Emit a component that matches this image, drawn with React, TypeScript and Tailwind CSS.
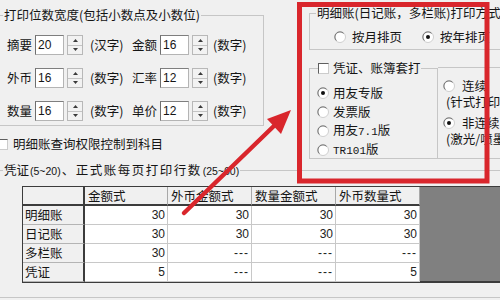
import React from "react";

function Radio({ checked = false }: { checked?: boolean }) {
  return (
    <svg width="12" height="12" viewBox="0 0 12 12" className="shrink-0">
      <circle cx="6" cy="6" r="5.5" fill="#ffffff" stroke="#cfcfcf" />
      <path d="M9.6 2.4 A5 5 0 0 0 2.4 9.6" stroke="#6e6e6e" fill="none" strokeWidth="1" />
      {checked && <circle cx="6" cy="6" r="2" fill="#111111" />}
    </svg>
  );
}

function CheckBox() {
  return (
    <span className="block w-[11px] h-[11px] shrink-0 bg-white border border-[#cccccc] border-l-[#5e5e5e] border-t-[#5e5e5e]" />
  );
}

function Spinner() {
  return (
    <div className="w-[16px] h-[20px] shrink-0 flex flex-col border border-[#b8b8b8] bg-[#f2f2f2]">
      <div className="flex-1 flex items-center justify-center border-b border-[#c4c4c4]">
        <svg width="5" height="3" viewBox="0 0 5 3">
          <path d="M0 3 L2.5 0 L5 3 Z" fill="#3a3a3a" />
        </svg>
      </div>
      <div className="flex-1 flex items-center justify-center">
        <svg width="5" height="3" viewBox="0 0 5 3">
          <path d="M0 0 L5 0 L2.5 3 Z" fill="#3a3a3a" />
        </svg>
      </div>
    </div>
  );
}

function NumInput({ v }: { v: string }) {
  return (
    <div className="w-[29px] h-[20px] shrink-0 bg-white border border-[#b4b4b4] border-l-[#6e6e6e] border-t-[#7e7e7e] flex items-center pl-[2px] font-['Liberation_Sans',sans-serif] text-[12px]">
      {v}
    </div>
  );
}

function FieldRow({
  a,
  av,
  at,
  b,
  bv,
}: {
  a: string;
  av: string;
  at: string;
  b: string;
  bv: string;
}) {
  return (
    <div className="flex items-center h-[20px]">
      <span className="w-[25px] shrink-0">{a}</span>
      <div className="ml-[3px]">
        <NumInput v={av} />
      </div>
      <div className="ml-[3px]">
        <Spinner />
      </div>
      <span className="ml-[7px] w-[38px] shrink-0">{at}</span>
      <span className="ml-[4px] w-[25px] shrink-0">{b}</span>
      <div className="ml-[3px]">
        <NumInput v={bv} />
      </div>
      <div className="ml-[3px]">
        <Spinner />
      </div>
      <span className="ml-[5px] shrink-0">(数字)</span>
    </div>
  );
}

const rows = [
  ["明细账", "30", "30", "30", "30"],
  ["日记账", "30", "30", "30", "30"],
  ["多栏账", "30", "---", "---", "---"],
  ["凭证", "5", "---", "---", "5"],
];
const heads = ["", "金额式", "外币金额式", "数量金额式", "外币数量式"];

export default function App() {
  return (
    <div className="relative w-[500px] h-[300px] overflow-hidden bg-[#f0f0f0] text-[#151515] text-[12.5px] leading-[16px] font-['Noto_Sans_CJK_SC',sans-serif]">
      {/* top section */}
      <div className="flex items-start h-[162px]">
        {/* left column */}
        <div className="ml-[-3px] w-[267px] shrink-0 flex flex-col">
          <fieldset className="mt-[7px] h-[119px] min-w-0 border border-[#c6c6c6]">
            <legend className="ml-[5px] px-[1px] leading-[16px]">打印位数宽度(包括小数点及小数位)</legend>
            <div className="mt-[12px] pl-[9px] flex flex-col gap-[13px]">
              <FieldRow a="摘要" av="20" at="(汉字)" b="金额" bv="16" />
              <FieldRow a="外币" av="16" at="(数字)" b="汇率" bv="12" />
              <FieldRow a="数量" av="16" at="(数字)" b="单价" bv="12" />
            </div>
          </fieldset>
          <div className="mt-[10px] h-[16px] flex items-center">
            <CheckBox />
            <span className="ml-[5px]">明细账查询权限控制到科目</span>
          </div>
        </div>

        {/* right column */}
        <div className="ml-[45px] w-[240px] shrink-0 flex flex-col">
          <fieldset className="mt-[5px] h-[45px] min-w-0 border border-[#c6c6c6]">
            <legend className="ml-[6px] px-[1px] leading-[16px] whitespace-nowrap">明细账(日记账，多栏账)打印方式</legend>
            <div className="mt-[8px] h-[16px] pl-[24px] flex items-center whitespace-nowrap">
              <Radio />
              <span className="ml-[6px]">按月排页</span>
              <span className="ml-[20px]">
                <Radio checked />
              </span>
              <span className="ml-[6px]">按年排页</span>
            </div>
          </fieldset>

          <div className="flex items-start">
            <fieldset className="mt-[10px] w-[129px] h-[99px] min-w-0 shrink-0 border border-[#c6c6c6]">
              <legend className="ml-[8px] leading-[16px]">
                <span className="inline-flex items-center">
                  <CheckBox />
                  <span className="ml-[4px]">凭证、账簿套打</span>
                </span>
              </legend>
              <div className="mt-[7px] pl-[7px] flex flex-col whitespace-nowrap">
                {[
                  ["用友专版", true],
                  ["发票版", false],
                  ["用友7.1版", false],
                  ["TR101版", false],
                ].map(([t, c]) => (
                  <div key={t as string} className="h-[19px] flex items-center">
                    <Radio checked={c as boolean} />
                    <span className="ml-[4px]">
                      {t === "用友7.1版" ? (
                        <>
                          用友<span className="font-['Liberation_Mono',monospace] text-[11px]">7.1</span>版
                        </>
                      ) : t === "TR101版" ? (
                        <>
                          <span className="font-['Liberation_Mono',monospace] text-[11px]">TR101</span>版
                        </>
                      ) : (
                        (t as string)
                      )}
                    </span>
                  </div>
                ))}
              </div>
            </fieldset>
            <div className="mt-[17px] w-[111px] h-[92px] shrink-0 border-t border-b border-[#c6c6c6] whitespace-nowrap">
              <div className="mt-[10px] pl-[5px] h-[16px] flex items-center">
                <Radio />
                <span className="ml-[7px]">连续</span>
              </div>
              <div className="pl-[8px] h-[16px] flex items-center">(针式打印机)</div>
              <div className="mt-[5px] pl-[5px] h-[16px] flex items-center">
                <Radio checked />
                <span className="ml-[7px]">非连续</span>
              </div>
              <div className="pl-[8px] h-[16px] flex items-center">(激光/喷墨打印机)</div>
            </div>
          </div>
        </div>
      </div>

      {/* bottom section */}
      <fieldset className="ml-[-3px] w-[506px] h-[136px] min-w-0 border border-[#c6c6c6]">
        <legend className="ml-[5px] px-[1px] leading-[16px] whitespace-nowrap">
          凭证<span className="font-['Liberation_Sans',sans-serif] text-[10.5px] px-[1px]">(5~20)</span>
          <span className="tracking-[1.5px]">、正式账每页打印行数</span>
          <span className="font-['Liberation_Sans',sans-serif] text-[10.5px] pl-[1px]">(25~60)</span>
        </legend>
        <div className="mt-[7px] ml-[24px] w-[480px] h-[97px] bg-[#808080] border-l border-t border-b-2 border-[#3c3c3c]">
          <div className="grid grid-cols-[62px_83px_84px_84px_84px] w-[397px]">
            {heads.map((h, i) => (
              <div
                key={"h" + i}
                className={
                  "h-[19px] bg-[#f0f0f0] border-b-2 border-b-[#3c3c3c] flex items-center pl-[3px] " +
                  (i === 0 ? "border-r-2 border-r-[#3c3c3c]" : "border-r border-r-[#a8a8a8]")
                }
              >
                {h}
              </div>
            ))}
            {rows.map((r, ri) =>
              r.map((c, ci) =>
                ci === 0 ? (
                  <div
                    key={ri + "-" + ci}
                    className="h-[19px] bg-[#f0f0f0] border-r-2 border-r-[#3c3c3c] border-b border-b-[#b4b4b4] flex items-center pl-[2px]"
                  >
                    {c}
                  </div>
                ) : (
                  <div
                    key={ri + "-" + ci}
                    className="h-[19px] bg-white border-r border-r-[#c8c8c8] border-b border-b-[#c8c8c8] flex items-center justify-end pr-[2px] font-['Liberation_Sans',sans-serif] text-[12px] text-[#222222]"
                  >
                    {c === "---" ? <span className="tracking-[1px]">---</span> : c}
                  </div>
                )
              )
            )}
          </div>
        </div>
      </fieldset>

      {/* red annotation overlay */}
      <svg className="absolute left-0 top-0 pointer-events-none" width="500" height="300" viewBox="0 0 500 300">
        <rect x="299.5" y="4.5" width="187.5" height="176.5" fill="none" stroke="#d9262c" strokeWidth="5" />
        <line x1="184" y1="213" x2="276" y2="124" stroke="#d9262c" strokeWidth="4.5" strokeLinecap="round" />
        <polygon points="291,110 281,134 267,119" fill="#d9262c" />
      </svg>
    </div>
  );
}
